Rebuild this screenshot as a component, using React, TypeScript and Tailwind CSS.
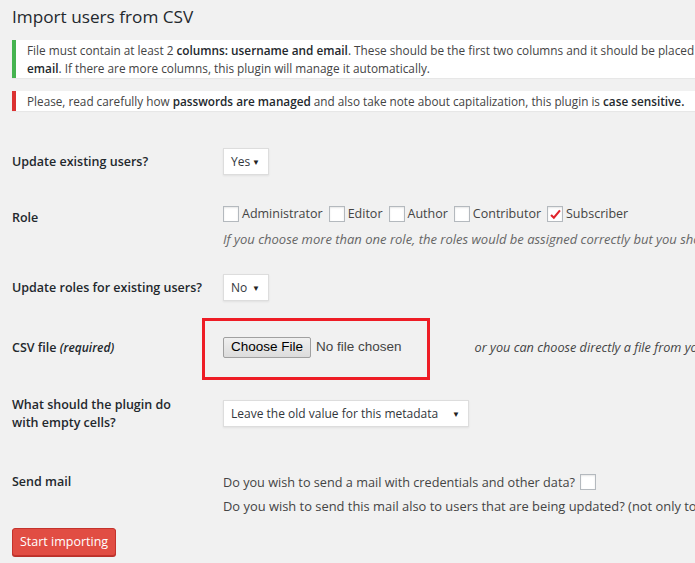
import React from 'react'

const FONT = { fontFamily: '"Open Sans", "Noto Sans", sans-serif' }
const ARIAL = { fontFamily: '"Liberation Sans", Arial, sans-serif' }

function Select({ value, width }: { value: string; width: string }) {
  return (
    <div
      className={`flex h-[27px] items-center justify-between border border-[#dddddd] bg-white pl-[7px] pr-[8px] text-[12px] text-[#32373c] shadow-[0_1px_2px_rgba(0,0,0,0.07)] ${width}`}
    >
      <span>{value}</span>
      <span className="text-[8px] leading-none text-[#222]">▼</span>
    </div>
  )
}

function Checkbox({ checked = false }: { checked?: boolean }) {
  return (
    <span className="flex h-[16px] w-[16px] shrink-0 items-center justify-center border border-[#b4b9be] bg-white shadow-[inset_0_1px_2px_rgba(0,0,0,0.1)]">
      {checked && (
        <svg width="13" height="13" viewBox="0 0 16 16">
          <path d="M2.5 8.5 L6 12 L13.5 3" fill="none" stroke="#e0242b" strokeWidth="2.6" />
        </svg>
      )}
    </span>
  )
}

function Row({
  label,
  className,
  labelClass = '',
  children,
}: {
  label: React.ReactNode
  className: string
  labelClass?: string
  children: React.ReactNode
}) {
  return (
    <div className={`flex ${className}`}>
      <div className={`w-[211px] shrink-0 text-[12.5px] font-semibold leading-[18px] text-[#23282d] ${labelClass}`}>
        {label}
      </div>
      <div className="flex-1">{children}</div>
    </div>
  )
}

export default function App() {
  return (
    <div className="h-[563px] w-[695px] overflow-hidden bg-[#f1f1f1]" style={FONT}>
      <div className="w-[1100px] pl-[12px]">
        <h1 className="pt-[4px] text-[17.2px] leading-[26px] text-[#23282d]">Import users from CSV</h1>

        <div className="mt-[10px] border-l-4 border-[#46b450] bg-white py-[1px] pl-[11px] text-[11.8px] leading-[18px] text-[#444] shadow-[0_1px_1px_rgba(0,0,0,0.04)]">
          <p className="whitespace-nowrap">
            File must contain at least 2 <b className="font-semibold text-[#23282d]">columns: username and email</b>. These should be the first two columns and it should be placed in this order: <b className="font-semibold text-[#23282d]">username and</b>
          </p>
          <p className="whitespace-nowrap">
            <b className="font-semibold text-[#23282d]">email</b>. If there are more columns, this plugin will manage it automatically.
          </p>
        </div>

        <div className="mt-[13px] border-l-4 border-[#dc3232] bg-white py-[1px] pl-[11px] text-[11.75px] leading-[18px] text-[#444] shadow-[0_1px_1px_rgba(0,0,0,0.04)]">
          <p className="whitespace-nowrap">
            Please, read carefully how <b className="font-semibold text-[#23282d]">passwords are managed</b> and also take note about capitalization, this plugin is <b className="font-semibold text-[#23282d]">case sensitive.</b>
          </p>
        </div>

        <Row label="Update existing users?" className="mt-[37px] items-center">
          <Select value="Yes" width="w-[46px]" />
        </Row>

        <Row label="Role" className="mt-[30px]" labelClass="pt-[4px]">
          <div className="flex items-center gap-[3px] text-[12.5px] leading-[18px] text-[#444]">
            <Checkbox /> <span className="mr-[3px]">Administrator</span>
            <Checkbox /> <span className="mr-[3px]">Editor</span>
            <Checkbox /> <span className="mr-[3px]">Author</span>
            <Checkbox /> <span className="mr-[3px]">Contributor</span>
            <Checkbox checked /> <span>Subscriber</span>
          </div>
          <p className="mt-[7px] whitespace-nowrap text-[13px] italic leading-[18px] text-[#666]">
            If you choose more than one role, the roles would be assigned correctly but you should use some plugin like User Role Editor to manage them.
          </p>
        </Row>

        <Row label="Update roles for existing users?" className="mt-[26px] items-center">
          <Select value="No" width="w-[46px]" />
        </Row>

        <Row
          label={
            <>
              CSV file <i className="text-[12px]">(required)</i>
            </>
          }
          className="relative mt-[36px] items-center"
        >
          <div className="flex items-center">
            <span
              className="flex h-[21px] items-center rounded-[2px] border border-[#a0a0a0] bg-gradient-to-b from-[#f0f0f0] to-[#dcdcdc] px-[7px] text-[13.5px] text-black"
              style={ARIAL}
            >
              Choose File
            </span>
            <span className="ml-[5px] text-[13.5px] text-[#444]" style={ARIAL}>
              No file chosen
            </span>
            <span className="ml-[73px] whitespace-nowrap text-[12.7px] italic text-[#444]">
              or you can choose directly a file from your host, click here.
            </span>
          </div>
          <div className="pointer-events-none absolute left-[190px] top-[-19px] h-[62px] w-[228px] border-[3px] border-[#ee1c25]" />
        </Row>

        <Row
          label={
            <>
              What should the plugin do
              <br />
              with empty cells?
            </>
          }
          className="mt-[42px]"
          labelClass="-mt-[4px]"
        >
          <Select value="Leave the old value for this metadata" width="w-[246px]" />
        </Row>

        <Row label="Send mail" className="mt-[39px]" labelClass="pt-[2px]">
          <div className="flex items-center gap-[5px] whitespace-nowrap text-[12.7px] leading-[22px] text-[#444]">
            Do you wish to send a mail with credentials and other data? <Checkbox />
          </div>
          <div className="mt-[2px] whitespace-nowrap text-[12.9px] leading-[22px] text-[#444]">
            Do you wish to send this mail also to users that are being updated? (not only to new users)
          </div>
        </Row>

        <button className="mt-[11px] h-[28px] rounded-[3px] border border-[#c4332c] bg-[#e14d43] px-[7px] text-[12.5px] text-white shadow-[0_1px_0_#b9312a]">
          Start importing
        </button>
      </div>
    </div>
  )
}
